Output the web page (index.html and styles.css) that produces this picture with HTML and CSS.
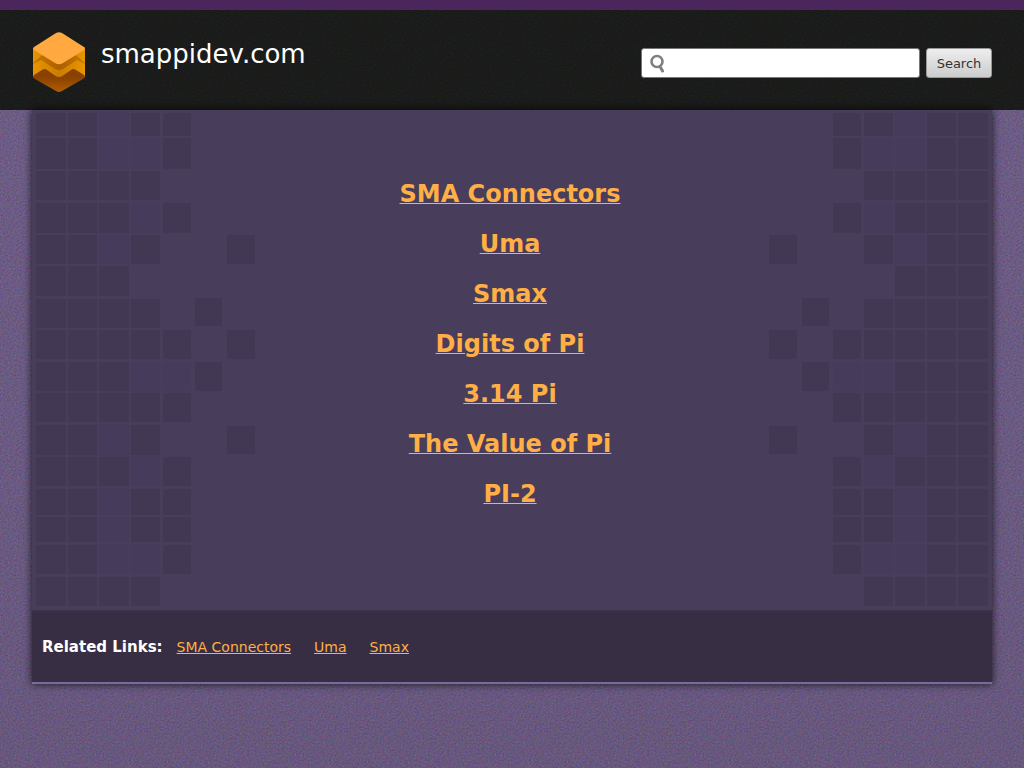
FILE: index.html
```html
<!DOCTYPE html>
<html lang="en">
<head>
<meta charset="utf-8">
<meta name="viewport" content="width=device-width, initial-scale=1">
<title>smappidev.com</title>
<link rel="stylesheet" href="styles.css">
</head>
<body>
<header class="header">
  <div class="brand">
    <svg class="logo" width="54" height="60" viewBox="0 0 54 60" aria-hidden="true">
      <defs>
        <linearGradient id="side" x1="0" x2="1" y1="0" y2="0">
          <stop offset="0" stop-color="#e89600"/><stop offset=".5" stop-color="#cc7d00"/><stop offset="1" stop-color="#e89600"/>
        </linearGradient>
        <linearGradient id="shade" x1="0" x2="1" y1="0" y2="0">
          <stop offset="0" stop-color="#c87a00"/><stop offset=".5" stop-color="#ad5f00"/><stop offset="1" stop-color="#c87a00"/>
        </linearGradient>
        <linearGradient id="base" x1="0" x2="0" y1="0" y2="1">
          <stop offset="0" stop-color="#843c00"/><stop offset=".5" stop-color="#8c4200"/><stop offset="1" stop-color="#b05e04"/>
        </linearGradient>
      </defs>
      <path fill="url(#base)" d="M1 32h52v12q0 2-2 3L30 59q-3 2-6 0L3 47q-2-1-2-3z"/>
      <path fill="url(#side)" d="M1 17h52v28l-1-2-8-5q-3-2-5 0L31 43.500q-4 3-8 0L15 38q-2-2-5 0l-8 5-1 2z"/>
      <path fill="url(#shade)" d="M1 31l8-7 4-2h28l4 2 8 7v1l-8-4-14 9q-4 2-8 0L9 28l-8 4z"/>
      <path fill="#ffa940" d="M2 15L24 1q3-1.500 6 0l22 14q2 1 0 3L31 31q-4 2.500-8 0L2 18q-2-1 0-3z"/>
    </svg>
    <h1 class="site-name">smappidev.com</h1>
  </div>
  <form class="search" role="search">
    <div class="search-field">
      <svg class="search-icon" width="16" height="20" viewBox="0 0 16 20" aria-hidden="true">
        <circle cx="7" cy="8.500" r="5.500" fill="none" stroke="#808080" stroke-width="2.600"/>
        <path d="M10 13.500L12.500 18" stroke="#808080" stroke-width="3" stroke-linecap="round"/>
      </svg>
      <input class="search-input" type="text" aria-label="Search terms">
    </div>
    <button class="search-button" type="submit">Search</button>
  </form>
</header>
<main class="panel">
  <section class="results">
    <svg class="tiles tiles-left" width="228" height="500" viewBox="0 0 228 500" aria-hidden="true">
      <g id="tile-set">
        <path class="tile-dark" d="M4 3h30v23h-30zM36 3h29v23h-29zM99 3h29v23h-29zM131 3h28v23h-28z
          M4 28h30v31h-30zM36 28h29v31h-29zM131 28h28v31h-28z
          M4 61h30v29h-30zM36 61h29v29h-29zM67 61h30v29h-30zM99 61h29v29h-29z
          M4 93h30v30h-30zM36 93h29v30h-29zM67 93h30v30h-30zM131 93h28v30h-28z
          M4 125h30v29h-30zM36 125h29v29h-29zM99 125h29v29h-29zM195 125h28v29h-28z
          M4 156h30v30h-30zM36 156h29v30h-29zM67 156h30v30h-30z
          M4 189h30v29h-30zM36 189h29v29h-29zM67 189h30v29h-30zM99 189h29v29h-29zM163 188h27v28h-27z
          M4 220h30v29h-30zM36 220h29v29h-29zM67 220h30v29h-30zM99 220h29v29h-29zM131 220h28v29h-28zM195 220h28v29h-28z
          M4 252h30v29h-30zM36 252h29v29h-29zM67 252h30v29h-30zM163 252h27v29h-27z
          M4 283h30v29h-30zM36 283h29v29h-29zM67 283h30v29h-30zM99 283h29v29h-29zM131 283h28v29h-28z
          M4 315h30v30h-30zM36 315h29v30h-29zM99 315h29v30h-29zM195 316h28v28h-28z
          M4 347h30v29h-30zM36 347h29v29h-29zM67 347h30v29h-30zM131 347h28v29h-28z
          M4 379h30v26h-30zM36 379h29v26h-29zM99 379h29v26h-29zM131 379h28v26h-28z
          M4 407h30v25h-30zM36 407h29v25h-29zM99 407h29v25h-29zM131 407h28v25h-28z
          M4 435h30v29h-30zM36 435h29v29h-29zM131 435h28v29h-28z
          M4 467h30v29h-30zM36 467h29v29h-29zM67 467h30v29h-30zM99 467h29v29h-29z"/>
        <path class="tile-faint" d="M67 3h30v23h-30zM67 28h30v31h-30zM99 28h29v31h-29zM99 93h29v30h-29z
          M67 125h30v29h-30zM99 252h29v29h-29zM131 252h28v29h-28zM67 315h30v30h-30zM99 347h29v29h-29z
          M67 379h30v26h-30zM67 407h30v25h-30zM67 435h30v29h-30zM99 435h29v29h-29z"/>
      </g>
    </svg>
    <svg class="tiles tiles-right" width="228" height="500" viewBox="0 0 228 500" aria-hidden="true">
      <use href="#tile-set" transform="translate(228 0) scale(-1 1)"/>
    </svg>
    <ul class="result-list">
      <li><a href="#">SMA Connectors</a></li>
      <li><a href="#">Uma</a></li>
      <li><a href="#">Smax</a></li>
      <li><a href="#">Digits of Pi</a></li>
      <li><a href="#">3.14 Pi</a></li>
      <li><a href="#">The Value of Pi</a></li>
      <li><a href="#">PI-2</a></li>
    </ul>
  </section>
  <nav class="related" aria-labelledby="related-title">
    <h2 class="related-title" id="related-title">Related Links:</h2>
    <ul class="related-list">
      <li><a href="#">SMA Connectors</a></li>
      <li><a href="#">Uma</a></li>
      <li><a href="#">Smax</a></li>
    </ul>
  </nav>
</main>
</body>
</html>
```
FILE: styles.css
```css
* {
  box-sizing: border-box;
}

body {
  margin: 0;
  min-height: 100vh;
  border-top: 10px solid #4a265c;
  background-color: #665384;
  background-image:
    url("data:image/svg+xml,%3Csvg xmlns='http://www.w3.org/2000/svg' width='200' height='200'%3E%3Cfilter id='n' x='0' y='0' width='100%25' height='100%25' color-interpolation-filters='sRGB'%3E%3CfeTurbulence type='fractalNoise' baseFrequency='.6' numOctaves='2' stitchTiles='stitch'/%3E%3CfeColorMatrix values='1.5 0 0 0 -.25 0 1.5 0 0 -.25 0 0 1.5 0 -.25 0 0 0 0 .15'/%3E%3C/filter%3E%3Crect width='200' height='200' filter='url(%23n)'/%3E%3C/svg%3E"),
    linear-gradient(#6a5788, #63507d);
  font-family: "DejaVu Sans", sans-serif;
  color: #fff;
}

ul {
  margin: 0;
  padding: 0;
  list-style: none;
}

a {
  color: #ffaf46;
  text-decoration-thickness: 1px;
}

.header {
  display: flex;
  justify-content: space-between;
  align-items: flex-start;
  min-height: 100px;
  padding: 22px 32px 0;
  background-color: #191a19;
  background-image: url("data:image/svg+xml,%3Csvg xmlns='http://www.w3.org/2000/svg' width='200' height='200'%3E%3Cfilter id='n' x='0' y='0' width='100%25' height='100%25' color-interpolation-filters='sRGB'%3E%3CfeTurbulence type='fractalNoise' baseFrequency='.6' numOctaves='2' stitchTiles='stitch'/%3E%3CfeColorMatrix values='.5 0 0 0 -.1 0 .5 0 0 -.1 0 0 .5 0 -.1 0 0 0 0 .15'/%3E%3C/filter%3E%3Crect width='200' height='200' filter='url(%23n)'/%3E%3C/svg%3E");
}

.brand {
  display: flex;
  gap: 15px;
}

.logo {
  display: block;
}

.site-name {
  margin: 0;
  padding-top: 6px;
  font-size: 26px;
  font-weight: normal;
  line-height: 32px;
}

.search {
  display: flex;
  gap: 6px;
  padding-top: 16px;
}

.search-field {
  display: flex;
  align-items: center;
  width: 279px;
  height: 30px;
  padding-left: 8px;
  border: 1px solid #777;
  border-radius: 3px;
  background: #fff;
}

.search-input {
  flex: 1;
  min-width: 0;
  height: 28px;
  border: 0;
  outline: 0;
  background: transparent;
  font: 14px "DejaVu Sans", sans-serif;
}

.search-button {
  min-width: 66px;
  height: 30px;
  padding: 0 9px;
  border: 1px solid #999;
  border-radius: 3px;
  background: linear-gradient(#eee, #ccc);
  color: #333;
  font: 13px "DejaVu Sans", sans-serif;
}

.panel {
  margin: 0 32px;
  box-shadow: 0 0 8px rgba(0, 0, 0, 0.8);
}

.results {
  position: relative;
  min-height: 500px;
  padding: 59px 4px 0 0;
  background: #483d5b;
}

.tiles {
  position: absolute;
  top: 0;
}

.tiles-left {
  left: 0;
}

.tiles-right {
  right: 0;
}

.tile-dark {
  fill: #433853;
}

.tile-faint {
  fill: #463b5a;
}

.result-list {
  position: relative;
  text-align: center;
  font-size: 24px;
  font-weight: bold;
  line-height: 50px;
}

.related {
  position: relative;
  display: flex;
  align-items: center;
  gap: 14px;
  min-height: 74px;
  padding: 2px 10px 0;
  border-bottom: 2px solid #7a6b9d;
  background: linear-gradient(#3e344b, #382e44 3px);
}

.related-title {
  margin: 0;
  font-size: 15px;
  line-height: 20px;
}

.related-list {
  display: flex;
  gap: 23px;
  font-size: 14px;
  line-height: 20px;
}
```
